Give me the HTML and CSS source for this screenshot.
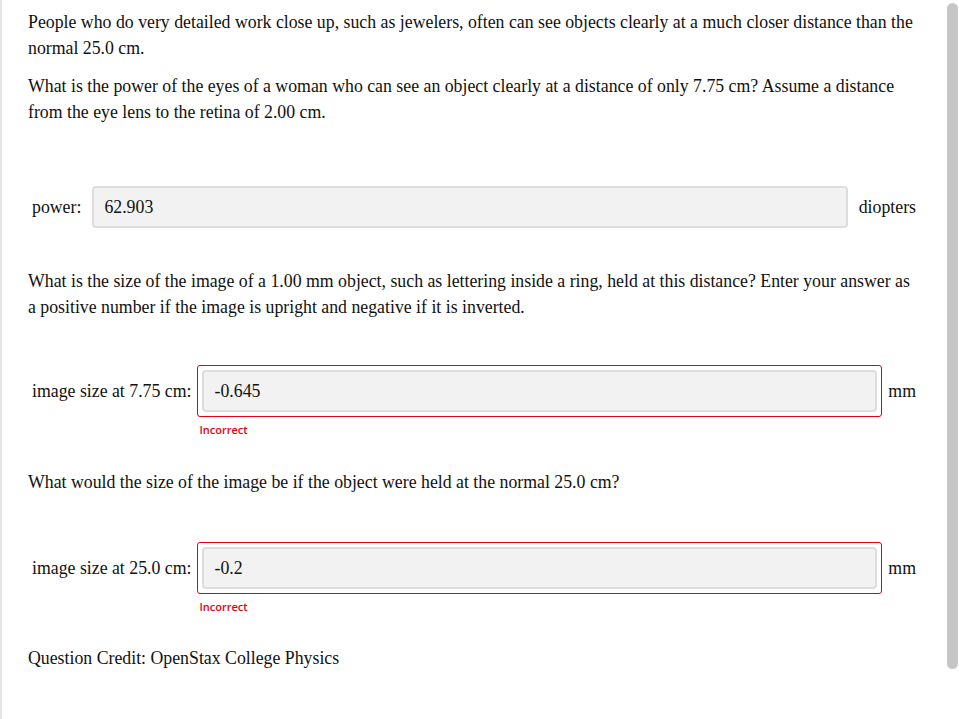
FILE: index.html
```html
<!DOCTYPE html>
<html lang="en">
<head>
<meta charset="utf-8">
<title>Question</title>
<link rel="stylesheet" href="styles.css">
</head>
<body>
<div class="page">
  <p class="para">People who do very detailed work close up, such as jewelers, often can see objects clearly at a much closer distance than the normal 25.0 cm.</p>
  <p class="para para-next">What is the power of the eyes of a woman who can see an object clearly at a distance of only 7.75 cm? Assume a distance from the eye lens to the retina of 2.00 cm.</p>

  <div class="answer answer-a">
    <label class="label">power:</label>
    <div class="field">
      <div class="wrap"><div class="input">62.903</div></div>
    </div>
    <span class="unit">diopters</span>
  </div>

  <p class="para para-b">What is the size of the image of a 1.00 mm object, such as lettering inside a ring, held at this distance? Enter your answer as a positive number if the image is upright and negative if it is inverted.</p>

  <div class="answer answer-b">
    <label class="label">image size at 7.75 cm:</label>
    <div class="field">
      <div class="wrap wrong"><div class="input">-0.645</div></div>
      <div class="feedback">Incorrect</div>
    </div>
    <span class="unit">mm</span>
  </div>

  <p class="para para-c">What would the size of the image be if the object were held at the normal 25.0 cm?</p>

  <div class="answer answer-c">
    <label class="label">image size at 25.0 cm:</label>
    <div class="field">
      <div class="wrap wrong"><div class="input">-0.2</div></div>
      <div class="feedback">Incorrect</div>
    </div>
    <span class="unit">mm</span>
  </div>

  <p class="para para-credit">Question Credit: OpenStax College Physics</p>
</div>
<div class="scrollbar"></div>
</body>
</html>
```

FILE: styles.css
```css
html, body {
  margin: 0;
  padding: 0;
  background: #ffffff;
}

body {
  font-family: "Liberation Serif", "Times New Roman", serif;
  font-size: 17.8px;
  color: #111111;
  line-height: 26px;
}

.page {
  border-left: 2px solid #e6e6e6;
  min-height: 719px;
  box-sizing: border-box;
  padding: 9px 41px 0 26px;
}

.para {
  margin: 0;
}

.para-next {
  margin-top: 12px;
}

.para-b {
  margin-top: 35px;
}

.para-c {
  margin-top: 32px;
}

.para-credit {
  margin-top: 31px;
}

.answer {
  display: flex;
  align-items: flex-start;
  padding: 0 2px 0 4px;
  gap: 6px;
}

.answer-a {
  margin-top: 56px;
}

.answer-b {
  margin-top: 45px;
}

.answer-c {
  margin-top: 47px;
}

.label {
  height: 52px;
  display: flex;
  align-items: center;
  white-space: nowrap;
}

.unit {
  height: 52px;
  display: flex;
  align-items: center;
  white-space: nowrap;
}

.field {
  flex: 1;
  display: flex;
  flex-direction: column;
}

.wrap {
  border: 1px solid transparent;
  border-radius: 3px;
  padding: 4px;
}

.wrap.wrong {
  border-color: #e4000f;
}

.input {
  box-sizing: border-box;
  height: 42px;
  border: 2px solid #dddddd;
  border-radius: 4px;
  background: #f2f2f2;
  padding: 0 10px;
  display: flex;
  align-items: center;
  color: #111111;
}

.feedback {
  font-family: "Open Sans", "Noto Sans", sans-serif;
  font-weight: 600;
  font-size: 11px;
  line-height: 14px;
  color: #e4000f;
  padding-left: 2px;
  margin-top: 6px;
}

.scrollbar {
  position: fixed;
  top: 3px;
  right: 1px;
  width: 11px;
  height: 666px;
  border-radius: 6px;
  background: #c6c6c6;
}
```
